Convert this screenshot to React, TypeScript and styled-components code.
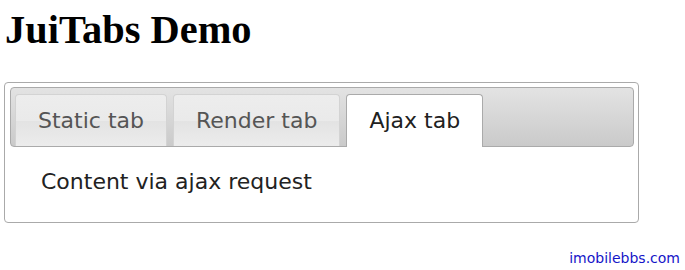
import React from "react";
import styled, { createGlobalStyle } from "styled-components";

const Global = createGlobalStyle`
  html, body { margin: 0; padding: 0; background: #fff; }
  body { font-family: "DejaVu Sans", Verdana, sans-serif; }
`;

const Page = styled.div`
  padding: 7px 46px 0 4px;
`;

const Title = styled.h1`
  margin: 0 0 29px 1px;
  font-family: "Liberation Serif", "Times New Roman", serif;
  font-weight: bold;
  font-size: 40.4px;
  line-height: 46px;
  color: #000;
`;

const Panel = styled.div`
  border: 1px solid #aaa;
  border-radius: 4px;
  padding: 4px 4px 5px 5px;
  background: #fff;
`;

const TabBar = styled.ul`
  list-style: none;
  margin: 0;
  padding: 6px 4px 0;
  display: flex;
  gap: 6px;
  border: 1px solid #aaa;
  border-radius: 4px;
  background: linear-gradient(#e3e3e3, #cacaca);
`;

const Tab = styled.li<{ $active?: boolean }>`
  font-size: 22px;
  line-height: 51px;
  padding: 0 22px;
  border: 1px solid ${(p) => (p.$active ? "#aaa" : "#d3d3d3")};
  border-bottom: 0;
  border-radius: 4px 4px 0 0;
  margin-bottom: ${(p) => (p.$active ? "-1px" : "0")};
  padding-bottom: ${(p) => (p.$active ? "1px" : "0")};
  background: ${(p) => (p.$active ? "#fff" : "linear-gradient(#ededed, #eaeaea 50%, #e3e3e3 52%, #ececec)")};
  color: ${(p) => (p.$active ? "#212121" : "#555")};
  white-space: nowrap;
`;

const Content = styled.div`
  font-size: 22px;
  line-height: 26px;
  padding: 22px 31px;
  color: #222;
`;

const Footer = styled.div`
  text-align: right;
  margin-top: 26px;
  margin-right: -41px;
  font-size: 14px;
  line-height: 18px;
  color: #1515c8;
`;

export default function App() {
  return (
    <>
      <Global />
      <Page>
        <Title>JuiTabs Demo</Title>
        <Panel>
          <TabBar>
            <Tab>Static tab</Tab>
            <Tab>Render tab</Tab>
            <Tab $active>Ajax tab</Tab>
          </TabBar>
          <Content>Content via ajax request</Content>
        </Panel>
        <Footer>imobilebbs.com</Footer>
      </Page>
    </>
  );
}
